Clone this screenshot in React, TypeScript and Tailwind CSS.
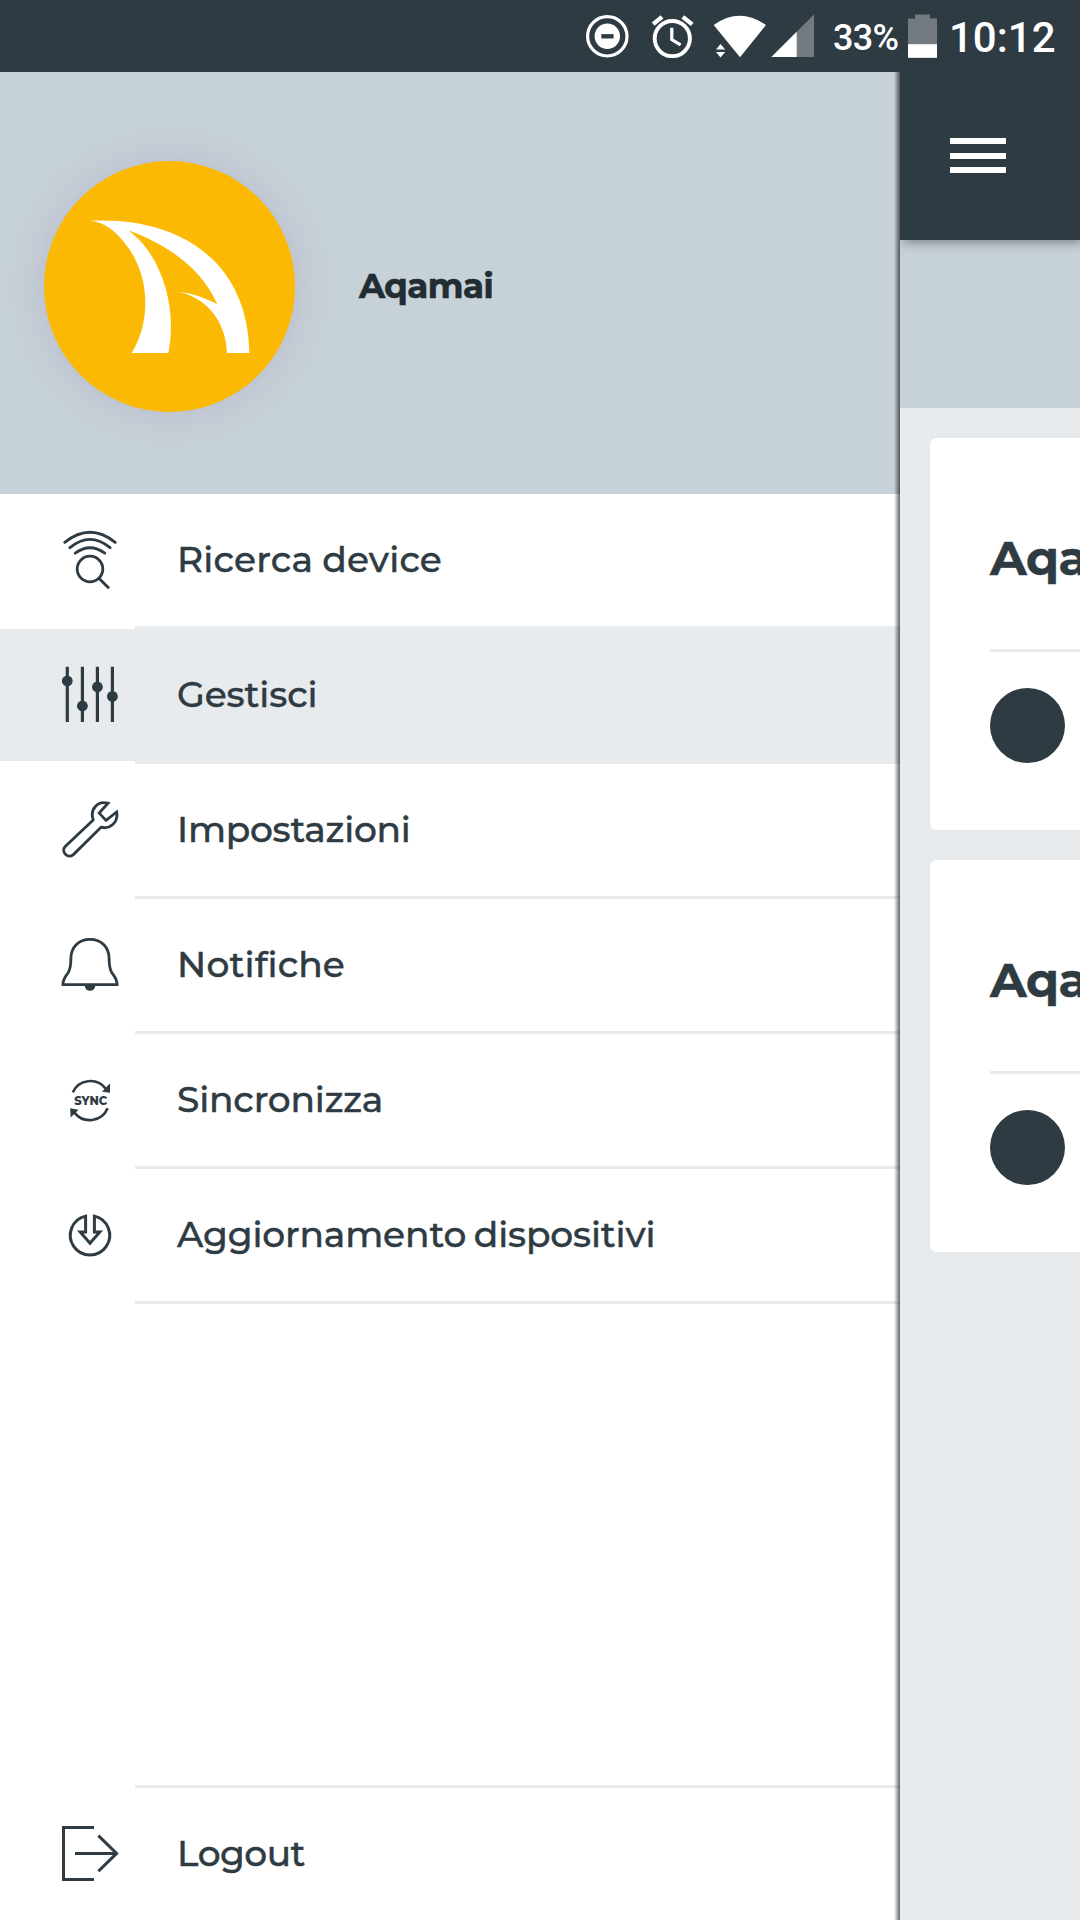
import React from "react";

type MenuItem = {
  label: string;
  tracking: string;
  icon: React.ReactNode;
  active?: boolean;
};

const iconProps = {
  viewBox: "0 0 60 60",
  className: "w-[60px] h-[60px] shrink-0",
  fill: "none",
  stroke: "currentColor",
  strokeWidth: 3,
};

const SearchDeviceIcon = () => (
  <svg {...iconProps} strokeLinecap="round" strokeWidth={2.8}>
    <path d="M4.8 12.3Q30 -7.8 55.2 12.3" />
    <path d="M9.9 17.7Q30 1 50.1 17.7" />
    <path d="M15.2 23.2Q30 12.2 44.8 23.2" />
    <circle cx="30" cy="39" r="12.8" />
    <path d="M39.2 48.4L48.2 57.4" />
  </svg>
);

const SlidersIcon = () => (
  <svg {...iconProps} strokeWidth={3.2}>
    <path d="M7.3 1.7V57M22.4 1.7V57M37.4 1.7V57M52.4 1.7V57" />
    <g fill="currentColor" stroke="none">
      <circle cx="7.3" cy="16" r="5.4" />
      <circle cx="22.4" cy="41" r="5.4" />
      <circle cx="37.4" cy="22" r="5.4" />
      <circle cx="52.4" cy="31.4" r="5.4" />
    </g>
  </svg>
);

const WrenchIcon = () => (
  <svg {...iconProps} strokeWidth={2.8}>
    <path d="M33.2 20L5.2 46.5C0.6 51.5 7.6 59.5 13.4 54.6L41 27.2C49.5 29.6 58.6 22.8 56.7 12L46 20.4L39.2 13.1L48 3.2C37.6 0.4 29.6 9.2 33.2 20Z" />
  </svg>
);

const BellIcon = () => (
  <svg {...iconProps} strokeWidth={2.8}>
    <path d="M30 4.4C18.5 4.4 10.9 12.5 10.9 23.5C10.9 30 10.8 33.5 8 38C5 42 3 44 2.9 49.6H57.1C57 44 55 42 52 38C49.2 33.5 49.1 30 49.1 23.5C49.1 12.5 41.5 4.4 30 4.4Z" />
    <path d="M24.7 50.5A5.3 5.2 0 0 0 35.3 50.5Z" fill="currentColor" stroke="none" />
  </svg>
);

const SyncIcon = () => (
  <svg {...iconProps} strokeWidth={2.6}>
    <path d="M12.8 22.4A19.3 19.3 0 0 1 45.5 18.4" />
    <path d="M47.6 38.2A19.3 19.3 0 0 1 14.5 42.6" />
    <g fill="currentColor" stroke="none">
      <path d="M50 13.2V22.8L42 21.8Z" />
      <path d="M10.2 38.2L18.6 39.7L10.6 47.6Z" />
      <text
        x="14.2"
        y="34.5"
        textLength="33"
        lengthAdjust="spacingAndGlyphs"
        className="font-['Montserrat','Inter',sans-serif] text-[12px] font-extrabold"
      >
        SYNC
      </text>
    </g>
  </svg>
);

const UpdateIcon = () => (
  <svg {...iconProps}>
    <path d="M34.4 11.1A19.7 19.7 0 1 1 25.6 11.1V26.9H20.2L30 38.3L39.8 26.9H34.4Z" />
  </svg>
);

const LogoutIcon = () => (
  <svg {...iconProps}>
    <path d="M34 3.4H3.5V55.6H34M15 29.4H56.6" />
    <path d="M38.4 11.6L56.6 29.4L38.4 47.2" />
  </svg>
);

const menuItems: MenuItem[] = [
  { label: "Ricerca device", tracking: "tracking-[0.2px] [word-spacing:-1px]", icon: <SearchDeviceIcon /> },
  { label: "Gestisci", tracking: "tracking-[-0.1px]", icon: <SlidersIcon />, active: true },
  { label: "Impostazioni", tracking: "tracking-[-0.25px]", icon: <WrenchIcon /> },
  { label: "Notifiche", tracking: "tracking-[0.15px]", icon: <BellIcon /> },
  { label: "Sincronizza", tracking: "tracking-[-0.2px]", icon: <SyncIcon /> },
  {
    label: "Aggiornamento dispositivi",
    tracking: "tracking-[-0.14px] [word-spacing:-2px]",
    icon: <UpdateIcon />,
  },
];

function StatusBar() {
  return (
    <header className="h-[72px] shrink-0 flex items-center bg-[#2f3b43] text-white font-['Roboto',sans-serif] font-medium pl-[585px]">
      {/* Do not disturb */}
      <svg viewBox="0 0 44 44" className="w-11 h-11 shrink-0" fill="none">
        <circle cx="22.3" cy="22.3" r="19.7" stroke="white" strokeWidth="3.2" />
        <circle cx="22.3" cy="22.3" r="12.7" fill="white" />
        <path d="M16.3 22.3H28.6" stroke="#2f3b43" strokeWidth="4.4" />
      </svg>
      {/* Alarm */}
      <svg viewBox="0 0 44 44" className="ml-[21px] w-11 h-11 shrink-0" fill="none" stroke="white">
        <circle cx="22.3" cy="24.6" r="17.6" strokeWidth="3.9" />
        <path d="M3.2 10.1L12 2.9M32.8 2.9L42.2 10.4" strokeWidth="4.4" />
        <path d="M21.8 13.7V25.6L30.6 30.8" strokeWidth="3.2" />
      </svg>
      {/* Wifi with traffic arrows */}
      <svg viewBox="0 0 54 44" className="ml-[19px] w-[54px] h-11 shrink-0" fill="white">
        <path d="M.7 11Q26.5 -7.4 53 11L27 43.2Z" />
        <path d="M3 35.4L7.5 29.9L12.2 35.4ZM3 37.9H12.2L7.5 43.4Z" />
      </svg>
      {/* Mobile signal */}
      <svg viewBox="0 0 43 44" className="ml-1 w-[43px] h-11 shrink-0">
        <path d="M43 .4V43H.4Z" fill="#737a80" />
        <path d="M25.7 17.7V43H.4Z" fill="white" />
      </svg>
      <span className="ml-[19px] mt-[3px] w-[75px] text-[36px] leading-[44px] tracking-[-0.7px] whitespace-nowrap">33%</span>
      {/* Battery */}
      <svg viewBox="0 0 29 44" className="w-[29px] h-11 shrink-0">
        <path d="M0 4.4H7V.4H22V4.4H29V43.8H0Z" fill="#737a80" />
        <path d="M0 30.2H29V43.8H0Z" fill="white" />
      </svg>
      <span className="ml-[12px] mt-[3px] text-[42px] leading-[44px] whitespace-nowrap">10:12</span>
    </header>
  );
}

function Logo() {
  return (
    <div className="w-[251px] h-[251px] shrink-0 rounded-full bg-[#fbb903] shadow-[0_0_36px_rgba(170,165,190,0.5)]">
      <svg viewBox="132 92 753 753" className="w-full h-full" fill="white">
        <path d="M270 271C560 258 745 410 748 668H681C679 595 640 510 539 485C585 490 620 505 652 522C608 420 510 345 384 300C482 368 534 530 505 668H395C455 570 450 430 374 338C345 300 312 275 270 271Z" />
      </svg>
    </div>
  );
}

function DrawerRow({ item }: { item: MenuItem }) {
  return (
    <li className="h-[135px] flex flex-col">
      <div className={`flex-1 flex items-center pl-[60px] ${item.active ? "bg-[#e7ebee]" : ""}`}>
        {item.icon}
        <span
          className={`ml-[57px] mb-[2px] text-[36px] leading-[44px] font-medium whitespace-nowrap [-webkit-text-stroke:0.4px_#2f3b43] ${item.tracking}`}
        >
          {item.label}
        </span>
      </div>
      <div className="ml-[135px] h-[3px] bg-[#e7ebee]" />
    </li>
  );
}

function Drawer() {
  return (
    <nav className="relative w-[900px] shrink-0 flex flex-col bg-white text-[#2f3b43]">
      <div className="h-[422px] shrink-0 flex items-center bg-[#c7d1d8] pl-11 pt-[6px]">
        <Logo />
        <h1 className="ml-[64px] text-[34px] font-bold tracking-[-0.5px] text-[#222d33] [-webkit-text-stroke:0.6px_#222d33]">
          Aqamai
        </h1>
      </div>
      <ul>
        {menuItems.map((item) => (
          <DrawerRow key={item.label} item={item} />
        ))}
      </ul>
      <div className="mt-auto ml-[135px] h-[3px] bg-[#e7ebee]" />
      <div className="h-[132px] flex items-center pl-[60px]">
        <LogoutIcon />
        <span className="ml-[57px] mb-[2px] text-[36px] leading-[44px] font-medium tracking-[-0.5px] [-webkit-text-stroke:0.4px_#2f3b43]">
          Logout
        </span>
      </div>
      {/* Drawer edge shadow */}
      <div className="absolute inset-y-0 right-0 w-[6px] bg-gradient-to-r from-black/0 to-black/60" />
    </nav>
  );
}

function DeviceCard() {
  return (
    <div className="w-[400px] h-[392px] rounded-md bg-white pl-[60px] shadow-[0_0_1px_rgba(0,0,0,0.12)]">
      <div className="h-[211px] flex items-center pt-7">
        <h2 className="text-[48px] font-bold tracking-[-0.6px] text-[#2f3b43] [-webkit-text-stroke:0.4px_#2f3b43]">
          Aqamai
        </h2>
      </div>
      <div className="h-[3px] bg-[#e7ebee]" />
      <div className="mt-9 w-[75px] h-[75px] rounded-full bg-[#2f3b43]" />
    </div>
  );
}

function MainPage() {
  return (
    <main className="flex-1 min-w-0 overflow-hidden bg-[#e7ebee]">
      <div className="relative h-[168px] bg-[#2f3b43] pl-[50px] pt-[66px] shadow-[3px_3px_10px_rgba(0,0,0,0.35)]">
        <div className="w-14 flex flex-col gap-[8.5px]">
          <span className="h-[6px] bg-white" />
          <span className="h-[6px] bg-white" />
          <span className="h-[6px] bg-white" />
        </div>
      </div>
      <div className="h-[168px] bg-[#c7d1d8]" />
      <div className="p-[30px] flex flex-col gap-[30px]">
        <DeviceCard />
        <DeviceCard />
      </div>
    </main>
  );
}

export default function App() {
  return (
    <div className="w-[1080px] h-[1920px] flex flex-col overflow-hidden font-['Montserrat','Inter',sans-serif]">
      <StatusBar />
      <div className="flex-1 min-h-0 flex">
        <Drawer />
        <MainPage />
      </div>
    </div>
  );
}
